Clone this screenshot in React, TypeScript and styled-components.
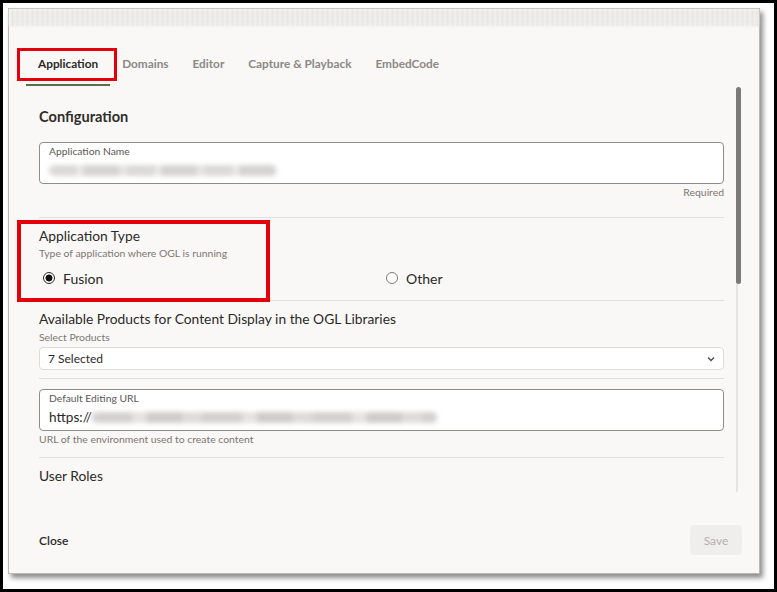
import styled, {createGlobalStyle} from "styled-components";

const GlobalStyle = createGlobalStyle`
  * {
    box-sizing: border-box;
  }
  body {
    margin: 0;
    background: #ffffff;
    font-family: Lato, "Liberation Sans", sans-serif;
  }
`

const tabs = ["Application", "Domains", "Editor", "Capture & Playback", "EmbedCode"];

const Chevron = () => (
    <svg width="8" height="6" viewBox="0 0 8 6">
        <path d="M1 1.5 L4 4.5 L7 1.5" fill="none" stroke="#4a4744" strokeWidth="1.3"/>
    </svg>
);

const App = () => {
    return (
        <Frame>
            <GlobalStyle/>
            <Dialog>
                <TopStrip/>
                <TabBar>
                    {tabs.map((t, i) => (
                        <Tab key={t} $active={i === 0}>{t}</Tab>
                    ))}
                </TabBar>
                <Body>
                    <Content>
                        <Heading>Configuration</Heading>
                        <Field $mt={16}>
                            <FieldLabel>Application Name</FieldLabel>
                            <FieldValue>
                                <Blur style={{width: 228}}/>
                            </FieldValue>
                        </Field>
                        <Hint $align="right">Required</Hint>
                        <Divider $mt={19}/>
                        <SectionTitle $mt={9}>Application Type</SectionTitle>
                        <Hint>Type of application where OGL is running</Hint>
                        <RadioRow>
                            <RadioOption>
                                <Radio $checked/>
                                Fusion
                            </RadioOption>
                            <RadioOption>
                                <Radio/>
                                Other
                            </RadioOption>
                        </RadioRow>
                        <Divider $mt={13}/>
                        <SectionTitle $mt={9}>Available Products for Content Display in the OGL Libraries</SectionTitle>
                        <Hint $mt={3}>Select Products</Hint>
                        <Select>
                            <span>7 Selected</span>
                            <Chevron/>
                        </Select>
                        <Divider $mt={8}/>
                        <Field $mt={10}>
                            <FieldLabel>Default Editing URL</FieldLabel>
                            <FieldValue>
                                https://
                                <Blur $light style={{width: 345}}/>
                            </FieldValue>
                        </Field>
                        <Hint>URL of the environment used to create content</Hint>
                        <Divider $mt={12}/>
                        <SectionTitle $mt={9}>User Roles</SectionTitle>
                    </Content>
                    <Track>
                        <Thumb/>
                        <TrackRest/>
                    </Track>
                </Body>
                <Footer>
                    <CloseButton>Close</CloseButton>
                    <SaveButton>Save</SaveButton>
                </Footer>
                <Callout style={{left: 8, top: 39, width: 100, height: 33}} $w={3}/>
                <Callout style={{left: 8, top: 211, width: 253, height: 82}} $w={4}/>
            </Dialog>
        </Frame>
    )
}

const Frame = styled.div`
  width: 777px;
  height: 592px;
  border: 3px solid #000;
  padding: 5px;
  background: #fff;
`

const Dialog = styled.div`
  position: relative;
  width: 752px;
  height: 566px;
  display: flex;
  flex-direction: column;
  background: #f9f8f6;
  border: 1px solid #b9b8b6;
  box-shadow: 3px 4px 5px rgba(0, 0, 0, 0.45);
`

const TopStrip = styled.div`
  height: 17px;
  flex: none;
  background-color: #ebeae8;
  background-image: repeating-linear-gradient(90deg, rgba(255, 255, 255, 0.6) 0 2px, transparent 2px 5px),
  repeating-linear-gradient(0deg, rgba(214, 213, 210, 0.5) 0 2px, transparent 2px 4px);
  filter: blur(0.8px);
`

const TabBar = styled.div`
  display: flex;
  margin-top: 18px;
  padding-left: 17px;
  flex: none;
`

const Tab = styled.div<{ $active?: boolean }>`
  height: 42px;
  padding: 12px 12px 0;
  font-size: 11.8px;
  line-height: 16px;
  font-weight: 700;
  color: ${p => p.$active ? "#2b2927" : "#8b8885"};
  border-bottom: 2px solid ${p => p.$active ? "#5a6e4c" : "transparent"};
  white-space: nowrap;
`

const Body = styled.div`
  display: flex;
  height: 406px;
  flex: none;
  overflow: hidden;
`

const Content = styled.div`
  flex: 1;
  padding: 22px 12px 0 30px;
  display: flex;
  flex-direction: column;
`

const Heading = styled.div`
  font-size: 14.6px;
  line-height: 18px;
  font-weight: 700;
  color: #312d2a;
`

const SectionTitle = styled.div<{ $mt?: number }>`
  margin-top: ${p => p.$mt ?? 0}px;
  font-size: 13.8px;
  line-height: 18px;
  color: #2b2927;
`

const Field = styled.div<{ $mt?: number }>`
  margin-top: ${p => p.$mt ?? 0}px;
  height: 42px;
  padding: 2px 9px 0;
  background: #fff;
  border: 1px solid #8f8d8a;
  border-radius: 4px;
`

const FieldLabel = styled.div`
  font-size: 10.3px;
  line-height: 12px;
  color: #5b5855;
`

const FieldValue = styled.div`
  margin-top: 5px;
  height: 16px;
  display: flex;
  align-items: center;
  font-size: 13.6px;
  line-height: 16px;
  color: #2b2927;
`

const Blur = styled.span<{ $light?: boolean }>`
  display: inline-block;
  height: 11px;
  border-radius: 5px;
  background: ${p => p.$light
          ? "repeating-linear-gradient(90deg, #d2d1cf 0 40px, #e4e3e1 40px 55px, #cdccca 55px 90px, #dddcda 90px 110px)"
          : "repeating-linear-gradient(90deg, #dad9d7 0 28px, #ebeae8 28px 34px, #d4d3d1 34px 70px, #e6e5e3 70px 78px)"};
  filter: blur(2.6px);
`

const Hint = styled.div<{ $align?: string; $mt?: number }>`
  margin-top: ${p => p.$mt ?? 2}px;
  font-size: 10.4px;
  line-height: 12px;
  color: #7a7774;
  text-align: ${p => p.$align ?? "left"};
`

const Divider = styled.div<{ $mt?: number }>`
  margin-top: ${p => p.$mt ?? 0}px;
  height: 1px;
  background: #e2e0dd;
`

const RadioRow = styled.div`
  margin-top: 10px;
  display: grid;
  grid-template-columns: 343px 1fr;
  padding-left: 4px;
`

const RadioOption = styled.label`
  display: flex;
  align-items: center;
  gap: 8px;
  height: 18px;
  font-size: 14px;
  color: #2b2927;
`

const Radio = styled.span<{ $checked?: boolean }>`
  width: 12px;
  height: 12px;
  border-radius: 50%;
  border: 1.3px solid ${p => p.$checked ? "#2b2927" : "#7d7a77"};
  background: ${p => p.$checked ? "radial-gradient(circle, #111 0 3.2px, #fff 3.8px)" : "#fff"};
`

const Select = styled.div`
  margin-top: 4px;
  height: 23px;
  padding: 0 8px 0 8px;
  display: flex;
  align-items: center;
  justify-content: space-between;
  background: #fff;
  border: 1px solid #dedcd9;
  border-radius: 4px;
  font-size: 12px;
  color: #2b2927;
`

const Track = styled.div`
  width: 5px;
  margin-right: 18px;
  display: flex;
  flex-direction: column;
`

const Thumb = styled.div`
  height: 197px;
  margin-top: 1px;
  border-radius: 3px;
  background: #7c7a78;
`

const TrackRest = styled.div`
  flex: 1;
  border-left: 2px solid #e6e4e1;
`

const Footer = styled.div`
  flex: 1;
  display: flex;
  align-items: flex-start;
  justify-content: space-between;
  padding: 33px 17px 0 30px;
`

const CloseButton = styled.div`
  height: 30px;
  display: flex;
  align-items: center;
  font-size: 12px;
  font-weight: 600;
  color: #2b2927;
`

const SaveButton = styled.div`
  width: 52px;
  height: 30px;
  display: flex;
  align-items: center;
  justify-content: center;
  background: #f0eeec;
  border-radius: 4px;
  font-size: 12px;
  color: #b4b1ae;
`

const Callout = styled.div<{ $w: number }>`
  position: absolute;
  border: ${p => p.$w}px solid #e3000b;
  pointer-events: none;
`

export default App;
